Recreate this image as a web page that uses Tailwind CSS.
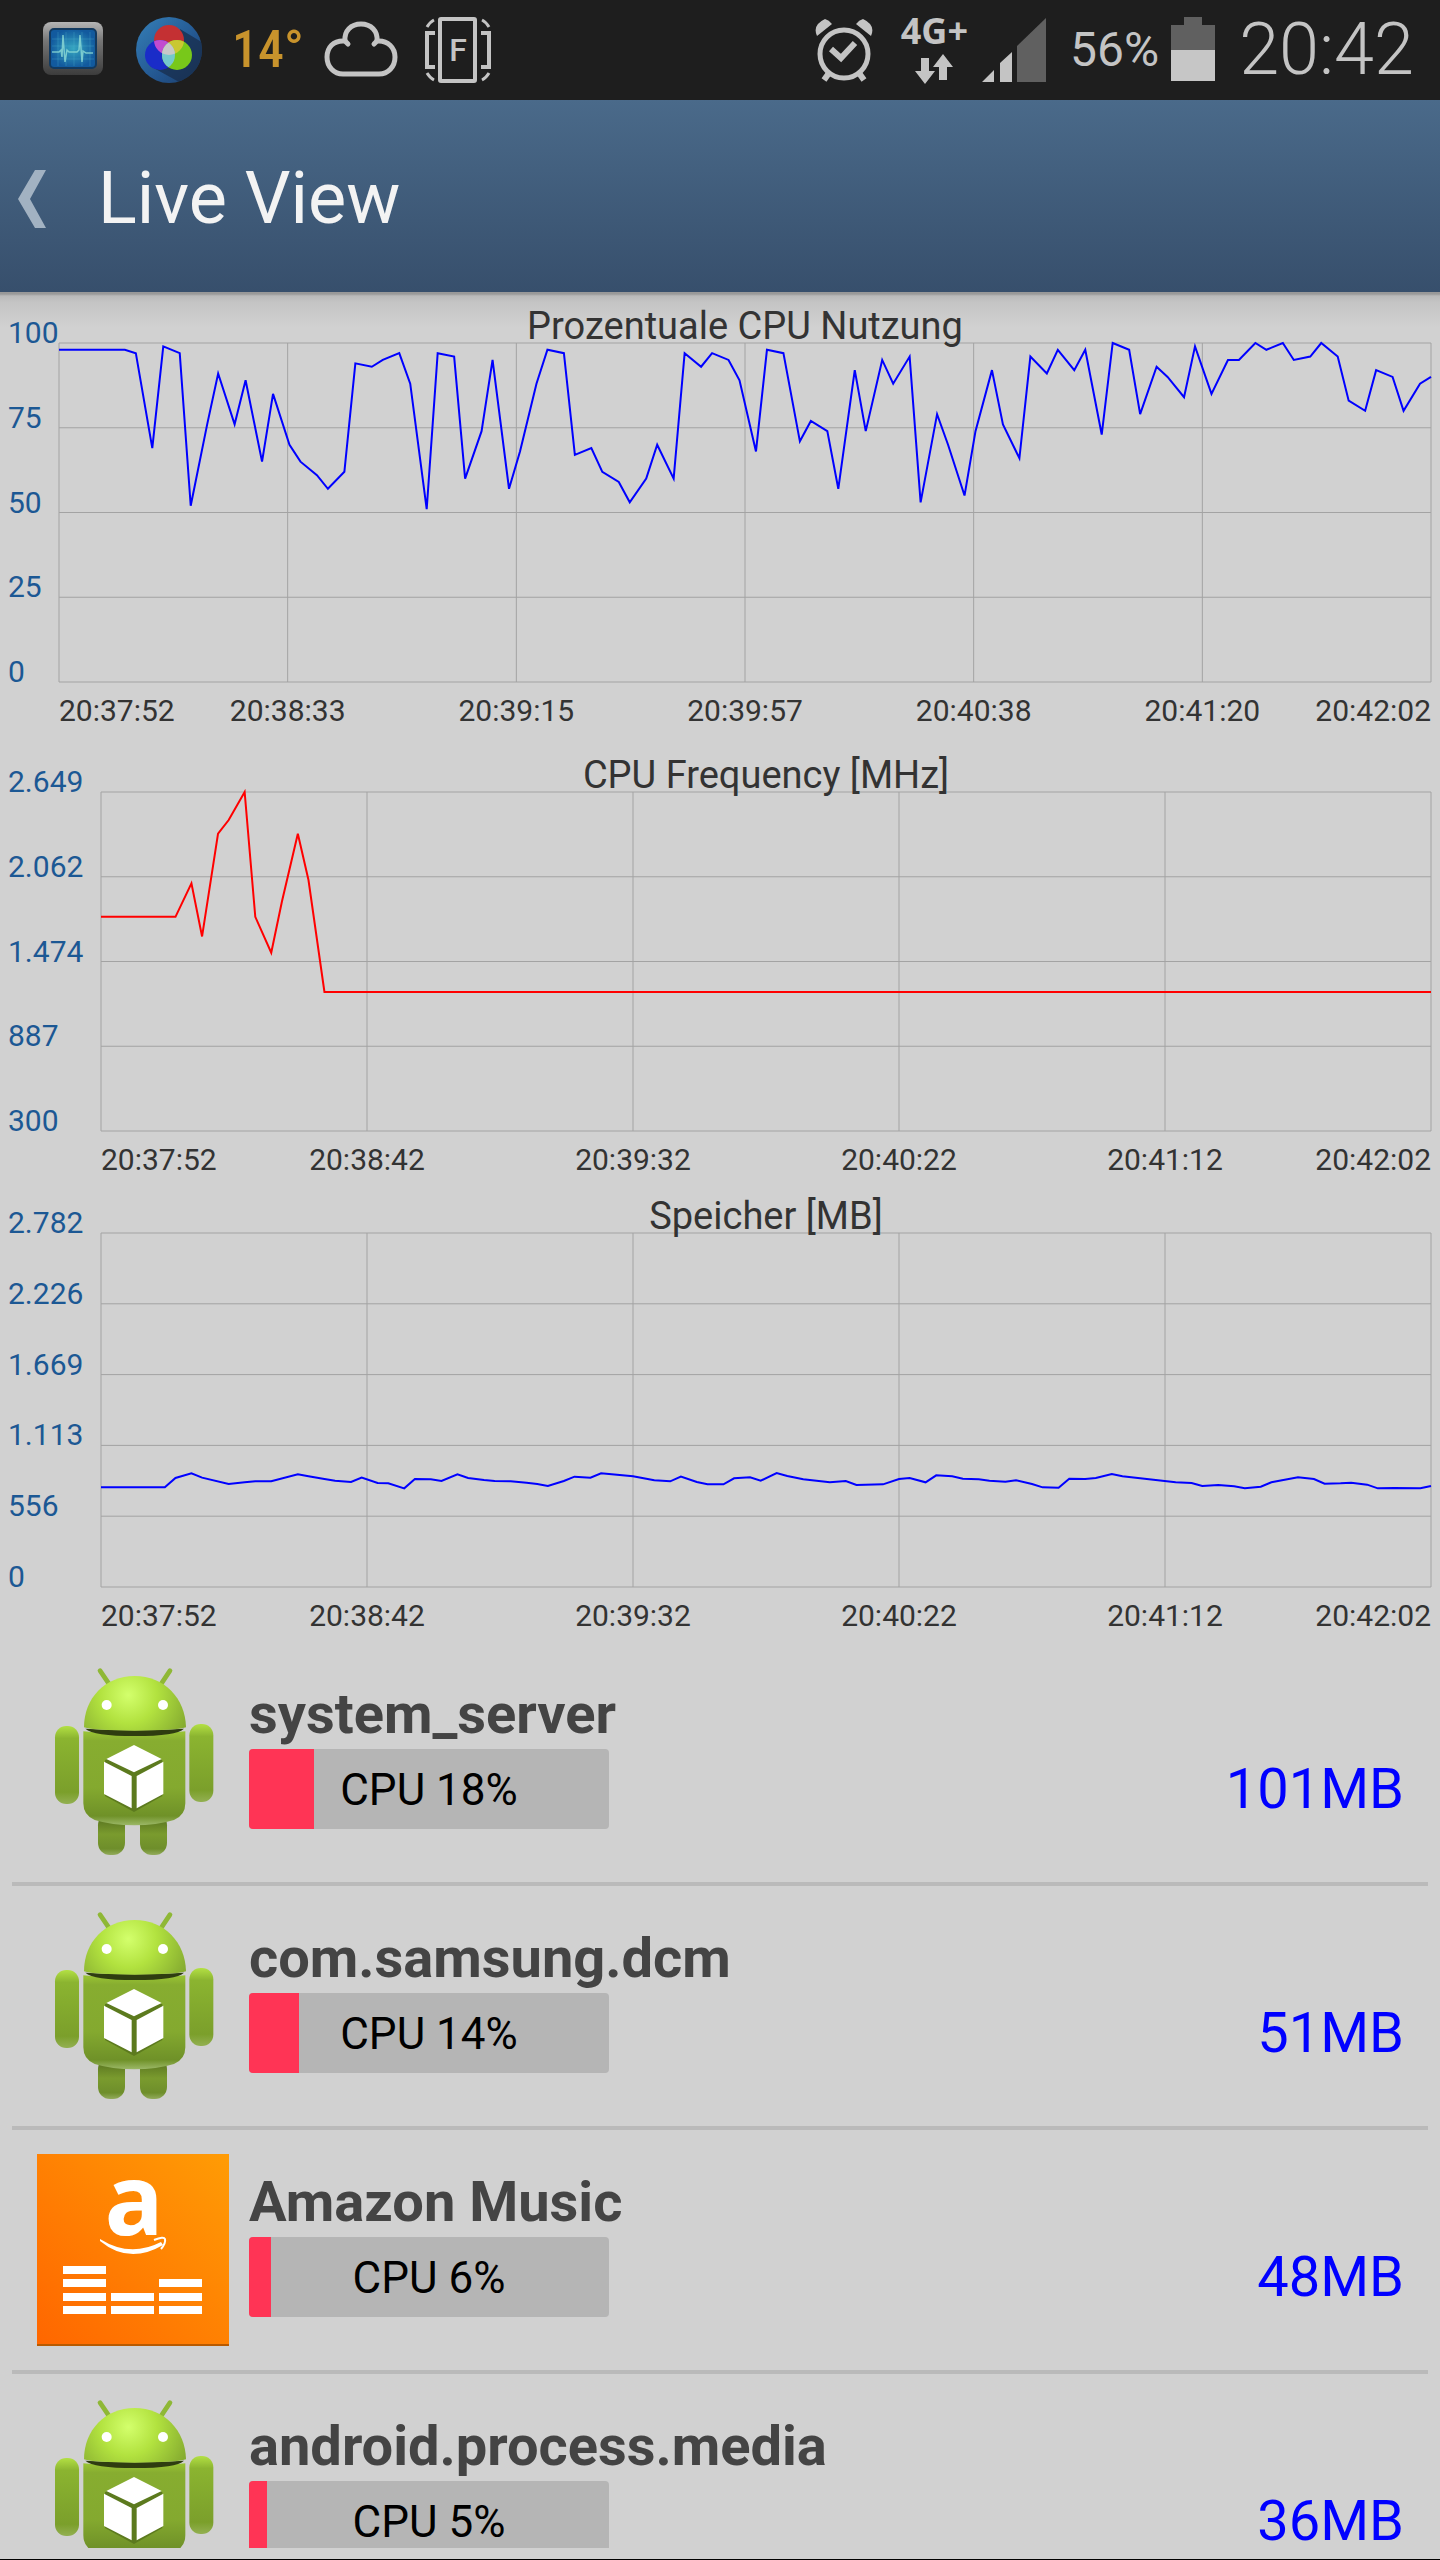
<!DOCTYPE html>
<html lang="de">
<head>
<meta charset="utf-8">
<meta name="viewport" content="width=device-width, initial-scale=1">
<title>Live View</title>
<script src="https://cdn.jsdelivr.net/npm/@tailwindcss/browser@4"></script>
</head>
<body class="flex h-screen flex-col overflow-hidden border-b border-black bg-[#d1d1d1] font-['Roboto','Noto_Sans',sans-serif] text-[#333]">

<!-- shared drawings -->
<svg class="absolute size-0" aria-hidden="true">
  <defs>
    <radialGradient id="head" gradientUnits="userSpaceOnUse" cx="295" cy="135" r="190">
      <stop offset="0" stop-color="#d3ff6c"/><stop offset=".45" stop-color="#b2e23f"/><stop offset="1" stop-color="#86ac30"/>
    </radialGradient>
    <linearGradient id="torso" x1="0" y1="0" x2="0" y2="1">
      <stop offset="0" stop-color="#9ac534"/><stop offset=".1" stop-color="#87ad30"/><stop offset=".6" stop-color="#84a92f"/><stop offset=".9" stop-color="#6f9128"/><stop offset="1" stop-color="#9cb868"/>
    </linearGradient>
    <linearGradient id="arm" x1="0" y1="0" x2="0" y2="1">
      <stop offset="0" stop-color="#b3e044"/><stop offset=".16" stop-color="#8bb430"/><stop offset=".85" stop-color="#7b9f2b"/><stop offset="1" stop-color="#93b052"/>
    </linearGradient>
    <linearGradient id="leg" x1="0" y1="0" x2="0" y2="1">
      <stop offset="0" stop-color="#4f681c"/><stop offset=".5" stop-color="#7a9b2e"/><stop offset=".85" stop-color="#6e8e2b"/><stop offset="1" stop-color="#93ab5c"/>
    </linearGradient>
    <linearGradient id="orange" x1="0" y1="1" x2="1" y2="0">
      <stop offset="0" stop-color="#ff6600"/><stop offset="1" stop-color="#ff9c05"/>
    </linearGradient>
  </defs>
  <symbol id="android" viewBox="21 48 576 576">
    <path d="M210 62 L240 106 M420 62 L392 104" stroke="#8fb836" stroke-width="14" stroke-linecap="round"/>
    <rect x="204" y="490" width="81" height="125" rx="36" fill="url(#leg)"/>
    <rect x="330" y="490" width="81" height="125" rx="36" fill="url(#leg)"/>
    <rect x="75" y="228" width="72" height="234" rx="34" fill="url(#arm)"/>
    <rect x="478" y="222" width="72" height="234" rx="34" fill="url(#arm)"/>
    <path d="M160 244 Q314 262 466 244 V460 Q466 496 432 510 Q380 526 313 526 Q246 526 194 510 Q160 496 160 460 Z" fill="url(#torso)"/>
    <path d="M166 236 Q314 246 462 236 Q440 258 314 258 Q190 258 166 236Z" fill="#2f3d10"/>
    <path d="M162 232 C162 145 225 78 314 78 C403 78 466 145 468 232 Q440 242 314 242 Q190 242 162 232Z" fill="url(#head)"/>
    <circle cx="230" cy="165" r="15" fill="#fff"/><circle cx="399" cy="165" r="15" fill="#fff"/>
    <path d="M312 289 L397 331 V438 L312 486 L225 438 V331Z" fill="#5c7a1e"/>
    <path d="M312 285 L395 327 L312 367 L229 327Z M222 335 L305 378 V475 L222 432Z M320 378 L400 335 V432 L320 475Z" fill="#fff"/>
  </symbol>
</svg>

<!-- status bar -->
<div class="flex h-[100px] shrink-0 items-center justify-between bg-[#1e1e1e] pr-[26px] pl-10 text-[#c4c4c4]">
  <div class="flex items-center gap-[27px]">
    <svg class="h-[66px] w-[66px]" viewBox="0 0 66 66" aria-label="Systemmonitor">
      <defs>
        <linearGradient id="bezel" x1="0" y1="0" x2="0" y2="1"><stop offset="0" stop-color="#b5b5b5"/><stop offset=".35" stop-color="#777"/><stop offset="1" stop-color="#3c3c3c"/></linearGradient>
        <radialGradient id="screen"><stop offset="0" stop-color="#35a5c0"/><stop offset="1" stop-color="#125a9e"/></radialGradient>
      </defs>
      <rect x="3" y="5" width="60" height="53" rx="8" fill="url(#bezel)"/>
      <rect x="10" y="12" width="46" height="39" rx="4" fill="url(#screen)" stroke="#123a60" stroke-width="2"/>
      <path d="M18 15V49M26 15V49M34 15V49M42 15V49M50 15V49M12 22H54M12 29H54M12 42H54" stroke="#4fb5cc" stroke-opacity=".3"/>
      <path d="M12 35H19L21 33L22 40L23 18L25 45L27 33L29 35H37L39 33L40 18L42 45L43 34L46 36H53" fill="none" stroke="#8fdcd6" stroke-opacity=".8" stroke-width="1.5"/>
    </svg>
    <svg class="h-[66px] w-[72px]" viewBox="0 0 72 66" aria-label="Farbfilter">
      <defs>
        <linearGradient id="disc" x1="0" y1="0" x2="1" y2="1"><stop offset="0" stop-color="#3580b8"/><stop offset=".6" stop-color="#235690"/><stop offset="1" stop-color="#1c3c66"/></linearGradient>
        <clipPath id="discClip"><circle cx="36" cy="33" r="33"/></clipPath>
        <clipPath id="redClip"><circle cx="36" cy="23" r="15"/></clipPath>
        <clipPath id="blueClip"><circle cx="27" cy="38" r="15"/></clipPath>
      </defs>
      <circle cx="36" cy="33" r="33" fill="url(#disc)"/>
      <path clip-path="url(#discClip)" d="M47 12L72 27V66H48L17 49L50 40Z" fill="#182e4c" fill-opacity=".75"/>
      <circle cx="36" cy="23" r="15" fill="#c43033"/>
      <circle cx="27" cy="38" r="15" fill="#1a2cc8"/>
      <circle cx="44" cy="38" r="15" fill="#78c81a"/>
      <circle cx="27" cy="38" r="15" fill="#c24bd0" clip-path="url(#redClip)"/>
      <circle cx="44" cy="38" r="15" fill="#c9c832" clip-path="url(#redClip)"/>
      <circle cx="44" cy="38" r="15" fill="#75c9cd" clip-path="url(#blueClip)"/>
      <g clip-path="url(#redClip)"><circle cx="44" cy="38" r="15" fill="#c8c8c8" clip-path="url(#blueClip)"/></g>
    </svg>
    <span class="w-[65px] font-['Roboto_Condensed','Liberation_Sans_Narrow','Roboto',sans-serif] text-[52px] leading-none font-medium whitespace-nowrap text-[#c8932c]">14°</span>
    <svg class="h-[66px] w-[74px]" viewBox="0 0 74 66" fill="none" stroke="#c4c4c4" stroke-width="5" stroke-linecap="round" aria-label="Wolke">
      <path d="M24 27L21 24C9 23 3 31 3 40C3 50 10 57 19 57H55C64 57 71 50 71 40C71 31 64 23 53 24L50 27"/>
      <path d="M21 24C20 14 27 7 37 7C47 7 54 14 53 24"/>
    </svg>
    <svg class="h-[66px] w-[66px]" viewBox="0 0 66 66" fill="none" stroke="#c4c4c4" stroke-width="4" aria-label="Drehung">
      <rect x="15" y="2" width="35" height="62" rx="1"/>
      <path d="M10 16H2V50H10M56 16H64V50H56"/>
      <path d="M9 3Q5 5 2 10M57 3Q61 5 64 10M2 56Q5 61 9 63M64 56Q61 61 57 63" stroke-width="3"/>
      <text x="33" y="44" text-anchor="middle" font-size="32" font-weight="500" fill="#c4c4c4" stroke="none">F</text>
    </svg>
  </div>
  <div class="flex items-center">
    <svg class="h-[66px] w-[62px]" viewBox="0 0 62 66" fill="none" stroke="#c4c4c4" aria-label="Wecker">
      <circle cx="31" cy="37" r="24" stroke-width="5"/>
      <path d="M18 32L28 41L42 26" stroke-width="6"/>
      <path d="M16 56L11 63M46 56L51 63" stroke-width="6"/>
      <path d="M4 19Q-1 8 12 2Q16 3 19 7Z M58 19Q63 8 50 2Q46 3 43 7Z" fill="#c4c4c4" stroke="none"/>
    </svg>
    <div class="ml-[26px] flex flex-col items-center">
      <span class="font-['Open_Sans','Noto_Sans',sans-serif] text-4xl leading-[30px] font-bold">4G+</span>
      <svg class="mt-2 h-[30px] w-[38px]" viewBox="0 0 38 30" fill="#c4c4c4" aria-label="Datenverkehr"><path d="M6 4H14V17H20L10 30L0 17H6Z M24 26V13H18L28 0L38 13H32V26Z"/></svg>
    </div>
    <svg class="ml-[14px] h-[66px] w-16" viewBox="0 0 64 66" aria-label="Signal"><path d="M0 65L12 53V65Z M18 65V46L30 35V65Z" fill="#c4c4c4"/><path d="M35 65V29L64 1V65Z" fill="#606060"/></svg>
    <span class="ml-6 text-5xl leading-[66px]">56%</span>
    <svg class="ml-3 h-[66px] w-11" viewBox="0 0 44 66" aria-label="Akku"><path d="M13 0H31V8H44V33H0V8H13Z" fill="#606060"/><path d="M0 33H44V64H0Z" fill="#c6c6c6"/></svg>
    <span class="ml-6 text-7xl leading-none font-light">20:42</span>
  </div>
</div>

<!-- title bar -->
<header class="flex h-48 shrink-0 items-center gap-[50px] bg-linear-to-b from-[#4a6a8a] to-[#374f6c] pt-[6px] pl-[18px]">
  <button type="button" aria-label="Zurück"><svg class="h-[60px] w-[30px]" viewBox="0 0 30 60"><path d="M17 1H28L12 30L28 59H17L0 30Z" fill="#a2b2c2"/></svg></button>
  <h1 class="text-7xl leading-[80px] text-[#f3f3f3]">Live View</h1>
</header>

<main class="flex min-h-0 flex-1 flex-col bg-[linear-gradient(#999_0px,#999_2px,#bababa_4px,#c4c4c4_10px,#d1d1d1_36px)] pt-[14px] pb-[11px]">

  <section class="flex pr-[9px]">
    <div class="mt-3 flex h-[369px] w-[59px] shrink-0 flex-col justify-between pl-2 text-3xl/[30px] text-[#1c5894]">
      <span>100</span><span>75</span><span>50</span><span>25</span><span>0</span>
    </div>
    <div class="min-w-0 flex-1">
      <h2 class="relative z-10 h-[37px] text-center text-[38px]/10">Prozentuale CPU Nutzung</h2>
      <svg class="block h-[339px] w-full overflow-visible" viewBox="0 0 250 100" preserveAspectRatio="none" fill="none">
        <svg viewBox="0 0 6 4" preserveAspectRatio="none" width="250" height="100" overflow="visible"><path vector-effect="non-scaling-stroke" stroke="#a3a3a3" d="M0 0H6M0 1H6M0 2H6M0 3H6M0 4H6M0 0V4M1 0V4M2 0V4M3 0V4M4 0V4M5 0V4M6 0V4"/></svg>
        <g transform="matrix(1 0 0 -1 0 100)"><polyline vector-effect="non-scaling-stroke" stroke="#00f" stroke-width="2" points="0,98 12,98 14,97 17,69 19,99 22,97 24,52 27,76 29,91 32,76 34,89 37,65 39,85 42,70 44,65 47,61 49,57 52,62 54,94 57,93 59,95 62,97 64,88 67,51 69,97 72,96 74,60 77,74 79,95 82,57 84,68 87,88 89,98 92,97 94,67 97,69 99,62 102,59 104,53 107,60 109,70 112,60 114,97 117,93 119,97 122,95 124,89 127,68 129,98 132,97 135,71 137,77 140,74 142,57 145,92 147,74 150,95 152,88 155,96 157,53 160,79 162,70 165,55 167,74 170,92 172,76 175,66 177,96 180,91 182,98 185,92 187,98 190,73 192,100 195,98 197,79 200,93 202,90 205,84 207,99 210,85 213,95 215,95 218,100 220,98 223,100 225,95 228,96 230,100 233,96 235,83 238,80 240,92 243,90 245,80 248,88 250,90"/></g>
      </svg>
      <div class="mt-[9px] flex text-3xl/10 whitespace-nowrap">
        <span class="w-0 grow">20:37:52</span><span class="flex w-0 grow-2 justify-center">20:38:33</span><span class="flex w-0 grow-2 justify-center">20:39:15</span><span class="flex w-0 grow-2 justify-center">20:39:57</span><span class="flex w-0 grow-2 justify-center">20:40:38</span><span class="flex w-0 grow-2 justify-center">20:41:20</span><span class="flex w-0 grow justify-end">20:42:02</span>
      </div>
    </div>
  </section>

  <section class="mt-6 flex pr-[9px]">
    <div class="mt-3 flex h-[369px] w-[101px] shrink-0 flex-col justify-between pl-2 text-3xl/[30px] text-[#1c5894]">
      <span>2.649</span><span>2.062</span><span>1.474</span><span>887</span><span>300</span>
    </div>
    <div class="min-w-0 flex-1">
      <h2 class="relative z-10 h-[37px] text-center text-[38px]/10">CPU Frequency [MHz]</h2>
      <svg class="block h-[339px] w-full overflow-visible" viewBox="0 0 250 2349" preserveAspectRatio="none" fill="none">
        <svg viewBox="0 0 5 4" preserveAspectRatio="none" width="250" height="2349" overflow="visible"><path vector-effect="non-scaling-stroke" stroke="#a3a3a3" d="M0 0H5M0 1H5M0 2H5M0 3H5M0 4H5M0 0V4M1 0V4M2 0V4M3 0V4M4 0V4M5 0V4"/></svg>
        <polyline vector-effect="non-scaling-stroke" stroke="#f00" stroke-width="2" points="0,865 14,865 17,633 19,1001 22,289 24,194 27,0 29,865 32,1114 34,760 37,289 39,610 42,1385 250,1385"/>
      </svg>
      <div class="mt-[9px] flex text-3xl/10 whitespace-nowrap">
        <span class="w-0 grow">20:37:52</span><span class="flex w-0 grow-2 justify-center">20:38:42</span><span class="flex w-0 grow-2 justify-center">20:39:32</span><span class="flex w-0 grow-2 justify-center">20:40:22</span><span class="flex w-0 grow-2 justify-center">20:41:12</span><span class="flex w-0 grow justify-end">20:42:02</span>
      </div>
    </div>
  </section>

  <section class="mt-4 flex pr-[9px]">
    <div class="mt-3 flex h-[384px] w-[101px] shrink-0 flex-col justify-between pl-2 text-3xl/[30px] text-[#1c5894]">
      <span>2.782</span><span>2.226</span><span>1.669</span><span>1.113</span><span>556</span><span>0</span>
    </div>
    <div class="min-w-0 flex-1">
      <h2 class="relative z-10 h-[37px] text-center text-[38px]/10">Speicher [MB]</h2>
      <svg class="block h-[354px] w-full overflow-visible" viewBox="0 0 250 1062" preserveAspectRatio="none" fill="none">
        <svg viewBox="0 0 5 5" preserveAspectRatio="none" width="250" height="1062" overflow="visible"><path vector-effect="non-scaling-stroke" stroke="#a3a3a3" d="M0 0H5M0 1H5M0 2H5M0 3H5M0 4H5M0 5H5M0 0V5M1 0V5M2 0V5M3 0V5M4 0V5M5 0V5"/></svg>
        <polyline vector-effect="non-scaling-stroke" stroke="#00f" stroke-width="2" points="0,763 12,763 14,735 17,721 19,734 24,753 27,748 29,745 32,745 37,724 39,730 42,738 44,743 47,747 49,734 52,750 54,751 57,766 59,738 62,739 64,744 67,724 69,735 72,741 74,744 77,745 80,749 82,753 84,759 87,744 89,731 92,734 94,721 97,725 100,730 102,736 104,742 107,745 109,731 112,747 114,754 117,754 119,736 122,733 124,743 127,720 129,729 132,739 137,748 140,744 142,756 147,754 150,738 152,735 155,748 157,727 160,730 162,737 165,739 167,743 170,746 172,742 175,753 177,763 180,764 182,737 185,738 187,735 190,723 192,730 197,739 202,748 205,750 207,759 210,756 213,760 215,766 218,761 220,748 225,733 228,738 230,752 233,751 235,749 238,755 240,766 243,765 248,766 250,759"/>
      </svg>
      <div class="mt-[9px] flex text-3xl/10 whitespace-nowrap">
        <span class="w-0 grow">20:37:52</span><span class="flex w-0 grow-2 justify-center">20:38:42</span><span class="flex w-0 grow-2 justify-center">20:39:32</span><span class="flex w-0 grow-2 justify-center">20:40:22</span><span class="flex w-0 grow-2 justify-center">20:41:12</span><span class="flex w-0 grow justify-end">20:42:02</span>
      </div>
    </div>
  </section>

  <!-- processes -->
  <ul class="mx-3 mt-[6px] min-h-0 flex-1 overflow-hidden">
    <li class="flex items-start border-b-4 border-[#bababa] py-6 pr-6 pl-[25px]">
      <svg class="size-48 shrink-0" aria-hidden="true"><use href="#android"/></svg>
      <div class="ml-5 flex-1 pt-4">
        <h3 class="text-[56px]/[64px] font-bold text-[#444]">system_server</h3>
        <div class="relative mt-[3px] h-20 w-[360px] overflow-hidden rounded-sm bg-[#b5b5b5]">
          <div class="absolute inset-y-0 left-0 bg-[#ff3455]" style="width:18%"></div>
          <p class="relative text-center text-[44px]/[82px] text-black">CPU 18%</p>
        </div>
      </div>
      <p class="mt-[91px] text-[56px]/[64px] text-[#00f]">101MB</p>
    </li>
    <li class="flex items-start border-b-4 border-[#bababa] py-6 pr-6 pl-[25px]">
      <svg class="size-48 shrink-0" aria-hidden="true"><use href="#android"/></svg>
      <div class="ml-5 flex-1 pt-4">
        <h3 class="text-[56px]/[64px] font-bold text-[#444]">com.samsung.dcm</h3>
        <div class="relative mt-[3px] h-20 w-[360px] overflow-hidden rounded-sm bg-[#b5b5b5]">
          <div class="absolute inset-y-0 left-0 bg-[#ff3455]" style="width:14%"></div>
          <p class="relative text-center text-[44px]/[82px] text-black">CPU 14%</p>
        </div>
      </div>
      <p class="mt-[91px] text-[56px]/[64px] text-[#00f]">51MB</p>
    </li>
    <li class="flex items-start border-b-4 border-[#bababa] py-6 pr-6 pl-[25px]">
      <svg class="size-48 shrink-0 overflow-visible" viewBox="0 0 192 192" aria-label="Amazon Music">
        <rect width="192" height="192" fill="url(#orange)"/>
        <path d="M0 191H192" stroke="#b85a00" stroke-width="2"/>
        <text x="97" y="81" text-anchor="middle" font-family="Open Sans, Noto Sans, sans-serif" font-size="98" font-weight="700" fill="#fff">a</text>
        <path d="M63 85Q93 104 124 88L126 91Q92 111 63 87Z" fill="#fff"/>
        <path d="M117 86Q127 82 128 85Q129 89 124 95" fill="none" stroke="#fff" stroke-width="2"/>
        <path d="M26 112H69V120H26Z M26 125H69V133H26Z M26 139H69V147H26Z M26 152H69V160H26Z M74 139H117V147H74Z M74 152H117V160H74Z M122 125H165V133H122Z M122 139H165V147H122Z M122 152H165V160H122Z" fill="#fff"/>
      </svg>
      <div class="ml-5 flex-1 pt-4">
        <h3 class="text-[56px]/[64px] font-bold text-[#444]">Amazon Music</h3>
        <div class="relative mt-[3px] h-20 w-[360px] overflow-hidden rounded-sm bg-[#b5b5b5]">
          <div class="absolute inset-y-0 left-0 bg-[#ff3455]" style="width:6%"></div>
          <p class="relative text-center text-[44px]/[82px] text-black">CPU 6%</p>
        </div>
      </div>
      <p class="mt-[91px] text-[56px]/[64px] text-[#00f]">48MB</p>
    </li>
    <li class="flex items-start border-b-4 border-[#bababa] py-6 pr-6 pl-[25px]">
      <svg class="size-48 shrink-0" aria-hidden="true"><use href="#android"/></svg>
      <div class="ml-5 flex-1 pt-4">
        <h3 class="text-[56px]/[64px] font-bold text-[#444]">android.process.media</h3>
        <div class="relative mt-[3px] h-20 w-[360px] overflow-hidden rounded-sm bg-[#b5b5b5]">
          <div class="absolute inset-y-0 left-0 bg-[#ff3455]" style="width:5%"></div>
          <p class="relative text-center text-[44px]/[82px] text-black">CPU 5%</p>
        </div>
      </div>
      <p class="mt-[91px] text-[56px]/[64px] text-[#00f]">36MB</p>
    </li>
  </ul>
</main>
</body>
</html>
